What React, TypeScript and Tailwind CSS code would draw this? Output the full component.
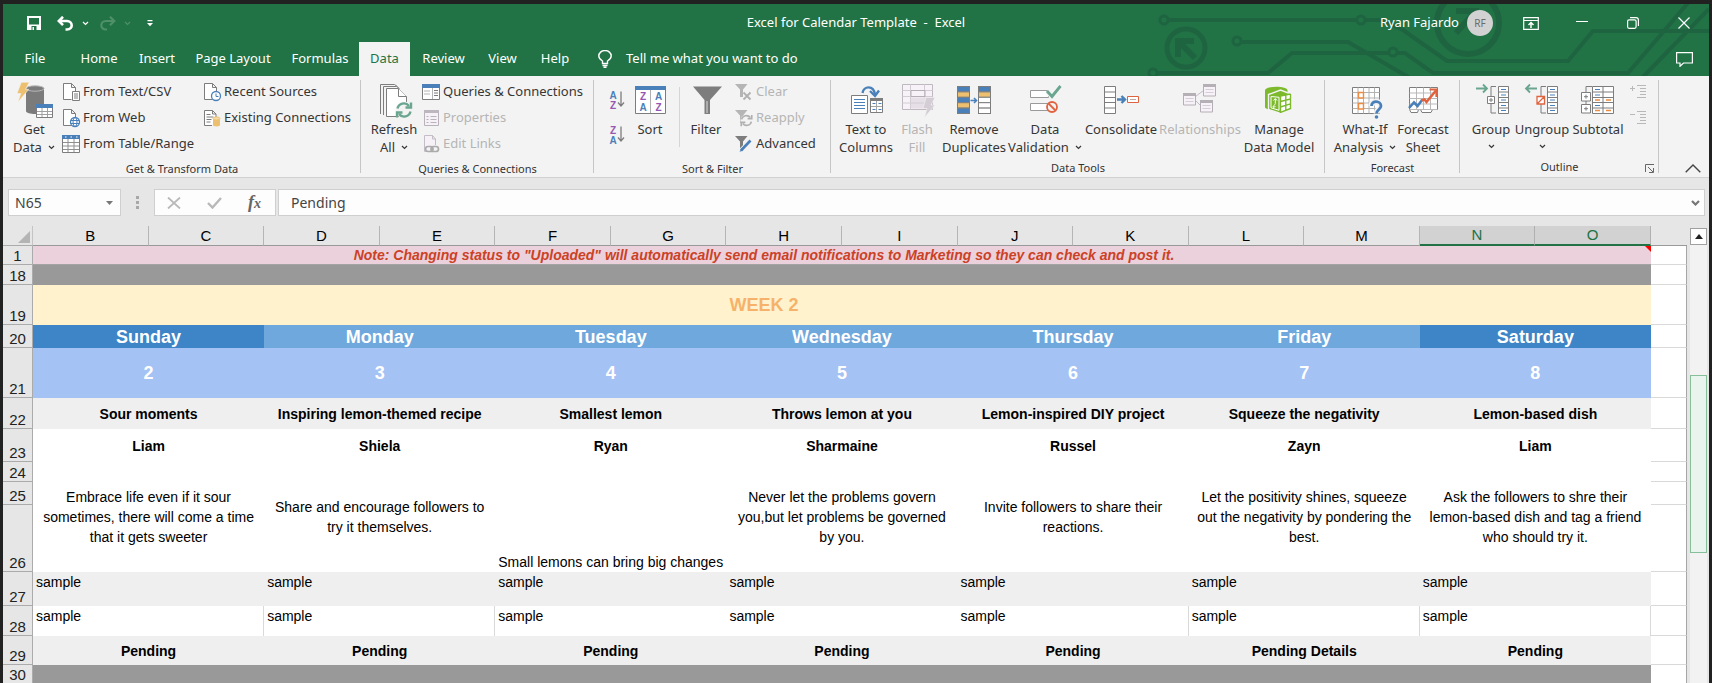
import React from 'react';
import clsx from 'clsx';

const BLUE = '#4a80ba';
const GRAY = '#7d7d7d';
const GREEN = '#6aa58f';
const RED = '#e0633f';
const GOLD = '#ecc06e';
const PURPLE = '#9558b2';

/* ---------- Small shared pieces ---------- */

function Chevron({ className }: { className?: string }) {
  return (
    <svg width="7" height="5" viewBox="0 0 7 5" className={className} fill="none" stroke="currentColor" strokeWidth="1.2">
      <path d="M1 1l2.5 2.5L6 1" />
    </svg>
  );
}

function LargeIcon({ children }: { children: React.ReactNode }) {
  return (
    <svg width="36" height="36" viewBox="0 0 36 36" fill="none" className="overflow-visible mb-0.5">
      {children}
    </svg>
  );
}

function SmallIcon({ children }: { children: React.ReactNode }) {
  return (
    <svg width="18" height="18" viewBox="0 0 18 18" fill="none" className="shrink-0 overflow-visible">
      {children}
    </svg>
  );
}

type LargeButtonProps = {
  icon: React.ReactNode;
  lines: string[];
  width: string;
  disabled?: boolean;
  arrow?: 'inline' | 'below';
};

function LargeButton({ icon, lines, width, disabled, arrow }: LargeButtonProps) {
  return (
    <button
      disabled={disabled}
      className={clsx('shrink-0 flex flex-col items-center pt-[3px] text-[13px] leading-[18px] whitespace-nowrap', width, disabled ? 'text-[#b5b5b5]' : 'text-[#363636]')}
    >
      <LargeIcon>{icon}</LargeIcon>
      {lines.map((line, i) => (
        <span key={line} className="flex items-center gap-1.5">
          {line}
          {arrow === 'inline' && i === lines.length - 1 && <Chevron />}
        </span>
      ))}
      {arrow === 'below' && <Chevron className="mt-1.5" />}
    </button>
  );
}

function SmallButton({ icon, label, disabled }: { icon: React.ReactNode; label: string; disabled?: boolean }) {
  return (
    <button
      disabled={disabled}
      className={clsx('h-[26px] flex items-center gap-[3px] text-[13px] whitespace-nowrap', disabled ? 'text-[#b5b5b5]' : 'text-[#363636]')}
    >
      <SmallIcon>{icon}</SmallIcon>
      {label}
    </button>
  );
}

function RibbonGroup({ label, width, children, launcher }: { label: string; width: string; children: React.ReactNode; launcher?: boolean }) {
  return (
    <section aria-label={label} className={clsx('relative shrink-0 flex flex-col pt-[3px]', width)}>
      <div className="h-[78px] flex">{children}</div>
      <div className="pt-0.5 text-center text-[11px] leading-[20px] text-[#333]">{label}</div>
      {launcher && (
        <button aria-label="Outline settings" className="absolute right-1 bottom-[3px]">
          <svg width="10" height="10" viewBox="0 0 10 10" fill="none" stroke="#666">
            <path d="M.5 8V.5H9M3 3l5 5M8.500 4v4.500H4" />
          </svg>
        </button>
      )}
      <span className="absolute right-0 top-1 bottom-1 w-px bg-[#c6c6c6]" />
    </section>
  );
}

/* ---------- Icons ---------- */

const pageOutline = (
  <path d="M9.500 16.500H1.500V.500h8l4 4V9M9.500.500v4h4" stroke={GRAY} fill="#fff" />
);

const textCsvIcon = (
  <>
    {pageOutline}
    <path d="M10.500 8.500h7v9h-7z" fill="#fff" stroke={GRAY} />
    <path d="M12 11h4M12 13h4M12 15h4" stroke={GRAY} />
  </>
);

const webIcon = (
  <>
    {pageOutline}
    <circle cx="13" cy="13" r="4.500" fill="#fff" stroke={BLUE} strokeWidth="1.300" />
    <ellipse cx="13" cy="13" rx="2" ry="4.500" stroke={BLUE} />
    <path d="M8.500 11.500h9M8.500 14.500h9" stroke={BLUE} />
  </>
);

const tableIcon = (
  <>
    <path d="M.5.500h17v17H.5z" fill="#fff" stroke={GRAY} />
    <path d="M0 0h18v4H0z" fill={BLUE} />
    <path d="M3 2h1.500M8.500 2H10M14 2h1.500" stroke="#fff" />
    <path d="M6 4v13M12 4v13M1 7.500h16M1 11h16M1 14.500h16" stroke="#909090" />
  </>
);

const recentIcon = (
  <>
    {pageOutline}
    <circle cx="13" cy="13" r="4.500" fill="#fff" stroke={BLUE} strokeWidth="1.300" />
    <path d="M13 10.500V13.500h2.500" stroke={BLUE} />
  </>
);

const existingIcon = (
  <>
    <path d="M9 16.500H1.500V1.500h8l3.500 3.500V8M9.500 1.500v3.500h3.500" stroke={GRAY} fill="#fff" />
    <path d="M3.500 5.500h4M3.500 8h7M3.500 10.500h5M3.500 13h4" stroke={GRAY} />
    <path d="M10 9.500h7v7q-3.500 2-7 0z" fill={GOLD} />
    <ellipse cx="13.500" cy="9.500" rx="3.500" ry="1.500" fill="#f7dca6" stroke={GOLD} />
  </>
);

const getDataIcon = (
  <>
    <path d="M10 7v22c0 4 18 4 18 0V7z" fill="#7b7b7b" />
    <ellipse cx="19" cy="6.500" rx="9" ry="2.700" fill="#7b7b7b" stroke="#b9b9b9" />
    <path d="M5.300 .3h8L9.500 7.300h3.300L1.800 20.300 4.800 11.500H1z" fill={GOLD} stroke="#f3f3f3" strokeWidth=".6" />
    <path d="M20.500 22.500h16v13h-16z" fill="#fff" stroke={GRAY} />
    <path d="M20 22h17v4H20z" fill={BLUE} />
    <path d="M26 26v9M31.500 26v9M21 29.500h15M21 32.500h15" stroke="#a0a0a0" />
  </>
);

const refreshArrows = (color: string, width: number) => (
  <g stroke={color} strokeWidth={width}>
    <path d="M-6.500 -1.500A6.500 6.500 0 0 1 5 -4" />
    <path d="M6.500 1.500A6.500 6.500 0 0 1 -5 4" />
    <path d="M7 -7.500V-2.500H1.500M-7 7.500V2.500H-1.500" />
  </g>
);

const refreshIcon = (
  <>
    <path d="M4.500 32V2.500h14l3 2" stroke={GRAY} />
    <path d="M7.500 33V4.500h13l3 2" stroke={GRAY} />
    <path d="M10.500 34.500V6.500h12l8 8v20z" fill="#fff" stroke={GRAY} />
    <path d="M22.500 6.500v8h8" fill="#fff" stroke={GRAY} />
    <circle cx="28" cy="28" r="8.500" fill="#f3f3f3" />
    <g transform="translate(28 28)">{refreshArrows(GREEN, 2.4)}</g>
  </>
);

const queriesIcon = (
  <>
    <path d="M.5 1.500h17v15H.5z" fill="#fff" stroke={GRAY} />
    <path d="M0 1h18v4H0z" fill={BLUE} />
    <path d="M10.500 5v11M2 8h6M2 11h6" stroke="#b5b5b5" />
    <path d="M12 7.500h4M12 10h4M12 12.500h4" stroke={GRAY} />
  </>
);

const propertiesIcon = (
  <>
    <path d="M2.500 1.500h14v15h-14z" fill="#f6f0f7" stroke="#b9b2ba" />
    <path d="M2 1h15v3H2z" fill="#bdb6be" />
    <path d="M4.500 7.500h2M4.500 10.500h2M4.500 13.500h2M8.500 7.500h6M8.500 10.500h6M8.500 13.500h6" stroke="#b9b2ba" />
  </>
);

const editLinksIcon = (
  <>
    <path d="M5 16.500H2.500V.500h8l3 3.500V10M10.500.500v3.500h3" stroke="#c4bcc6" fill="#f6f0f7" />
    <rect x="3.500" y="11.500" width="7.500" height="5" rx="2.500" stroke="#ababab" strokeWidth="1.700" />
    <rect x="9" y="11.500" width="7.500" height="5" rx="2.500" stroke="#ababab" strokeWidth="1.700" />
  </>
);

function SortLetters({ first, second }: { first: string; second: string }) {
  return (
    <svg width="17" height="18" viewBox="0 0 17 18" fill="none" className="overflow-visible font-['Liberation_Sans',sans-serif]">
      <g textAnchor="middle" fontSize="10" fontWeight="700">
        <text x="4" y="8" fill={first === 'A' ? BLUE : PURPLE}>{first}</text>
        <text x="4" y="17.500" fill={second === 'A' ? BLUE : PURPLE}>{second}</text>
      </g>
      <path d="M12 .5v14.500M9 11.500l3 3.500 3-3.500" stroke={GRAY} strokeWidth="1.300" />
    </svg>
  );
}

const sortIcon = (
  <>
    <path d="M3.500 4.500h30v27h-30z" fill="#fff" stroke={GRAY} />
    <path d="M3 4h31v4H3z" fill={BLUE} />
    <path d="M18.500 8v23" stroke="#b0b0b0" />
    <g fontSize="10" fontWeight="700" textAnchor="middle" className="font-['Liberation_Sans',sans-serif]">
      <text x="11" y="18" fill={PURPLE}>Z</text>
      <text x="11" y="28.500" fill={BLUE}>A</text>
      <text x="26.500" y="18" fill={BLUE}>A</text>
      <text x="26.500" y="28.500" fill={PURPLE}>Z</text>
    </g>
  </>
);

const filterIcon = (
  <>
    <path d="M5 4.500h29L22 18v14h-5.500V18z" fill={GRAY} />
    <path d="M19 19v12" stroke="#bdbdbd" strokeWidth="1.500" />
  </>
);

const smallFunnel = (color: string) => <path d="M0 1h12.500L8 6.500V14H5V6.500z" fill={color} />;

const clearIcon = (
  <>
    {smallFunnel('#b5b5b5')}
    <path d="M8.500 9.500l7 7M15.500 9.500l-7 7" stroke="#b0b0b0" strokeWidth="1.800" />
  </>
);

const reapplyIcon = (
  <>
    {smallFunnel('#b5b5b5')}
    <circle cx="11.500" cy="11.500" r="6" fill="#f3f3f3" />
    <g transform="translate(11.500 11.500) scale(.75)">{refreshArrows('#b0b0b0', 2.2)}</g>
  </>
);

const advancedIcon = (
  <>
    {smallFunnel(GRAY)}
    <path d="M15.500 5.500L6 15.500" stroke="#f3f3f3" strokeWidth="4.500" />
    <path d="M15.500 5.500L6 15.500" stroke={BLUE} strokeWidth="2.600" />
    <path d="M6.500 13L4.500 17l4-2z" fill={BLUE} />
  </>
);

const textToColumnsIcon = (
  <>
    <path d="M3.500 13.500h16v18h-16z" fill="#fff" stroke={GRAY} />
    <path d="M6 17.500h11M6 20.500h11M6 23.500h11M6 26.500h11" stroke={BLUE} />
    <path d="M22.500 16.500h12v14h-12z" fill="#fff" stroke={GRAY} />
    <path d="M22 16h13v3H22z" fill={GRAY} />
    <path d="M28.500 19v11M23 24.500h11" stroke="#a5a5a5" />
    <path d="M24.500 21.500h3M30.500 21.500h3M24.500 27.500h3M30.500 27.500h3" stroke={BLUE} />
    <path d="M14.500 11c1-7 11-8.500 12.500 1.500" stroke={BLUE} strokeWidth="2.400" />
    <path d="M22 9l5 5 4-5.500" stroke={BLUE} strokeWidth="2.400" />
  </>
);

const flashFillIcon = (
  <>
    <path d="M3.500 2.500h30v25h-30z" fill="#f7f1f8" stroke="#bfb8c0" />
    <path d="M12 15.500h20v11H12z" fill="#e6dfe7" />
    <path d="M3.500 8.500h30M3.500 14.500h30M3.500 21h30M11.500 2.500v25M25.500 2.500v13" stroke="#d3ccd4" />
    <path d="M12 8.500h14v6H12z" stroke="#b5aeb6" />
    <path d="M27 15.500h9l-4 7.500h4L25.500 35.500l2.500-9h-4z" fill="#d4cdd5" stroke="#f3f3f3" strokeWidth=".6" />
  </>
);

const duplicateRows = [BLUE, GOLD, BLUE, GOLD, BLUE];
const uniqueRows = [BLUE, GOLD, '#fff', '#fff', '#fff'];

const removeDuplicatesIcon = (
  <>
    {duplicateRows.map((fill, i) => (
      <rect key={i} x="1.500" y={4.5 + i * 5.4} width="12" height="5.400" fill={fill} stroke={GRAY} />
    ))}
    {uniqueRows.map((fill, i) => (
      <rect key={i} x="22.500" y={4.5 + i * 5.4} width="12" height="5.400" fill={fill} stroke={GRAY} />
    ))}
    <path d="M14.500 18.500h6M18 16l2.500 2.500L18 21" stroke={BLUE} strokeWidth="1.600" />
  </>
);

const validationIcon = (
  <>
    <path d="M3.500 8.500h18v7h-18zM3.500 21.500h18v7h-18z" fill="#fff" stroke="#9a9a9a" />
    <path d="M20 9l5 5.500L33.500 4" stroke="#f3f3f3" strokeWidth="5" />
    <path d="M20 9l5 5.500L33.500 4" stroke={GREEN} strokeWidth="2.800" />
    <circle cx="25" cy="25" r="5" fill="#f3f3f3" stroke={RED} strokeWidth="1.800" />
    <path d="M21.500 21.500l7 7" stroke={RED} strokeWidth="1.800" />
  </>
);

const consolidateIcon = (
  <>
    <path d="M1.500 4.500h11v27h-11zM1.500 10h11M1.500 15.500h11M1.500 20.500h11M1.500 26h11" fill="#fff" stroke={GRAY} />
    <path d="M14 17.500h8M18.500 14l3.500 3.500-3.500 3.500" stroke={BLUE} strokeWidth="2.400" />
    <path d="M24.500 14.500h11v6h-11z" fill="#fff" stroke={RED} />
    <path d="M27 17.500h6" stroke="#b9a9a5" />
  </>
);

const relationshipsIcon = (
  <>
    <path d="M13.500 14.500l8-6M13.500 18.500l5 5" stroke="#c4bcc6" />
    {[[1.5, 11.5], [21.5, 2.5], [18.5, 18.5]].map(([x, y]) => (
      <g key={x} transform={`translate(${x} ${y})`}>
        <path d="M0 0h12v11.500H0z" fill="#f7f1f8" stroke="#b5aeb6" />
        <path d="M-.5-.5h13v3h-13z" fill="#b5b0b6" />
        <path d="M2 5h8M2 8h8" stroke="#d6cdd8" />
      </g>
    ))}
  </>
);

const dataModelIcon = (
  <>
    <path d="M4 8.500c0-5 22.500-5 22.500 0v17c-4 4-19 4-22.500 0z" fill="#7cba2c" />
    <path d="M7.500 12.500L19.500 8l10.500 4v15l-10.500 4.500-12-4z" fill="#7cba2c" stroke="#f3f3f3" strokeWidth="1.400" />
    <path d="M19.500 14l10-2v14.500l-10 4z" fill="#fff" />
    <path d="M19.500 14v17M24.800 13v16M29.500 12v15M19.500 14l10-2M19.500 19.500l10-2.500M19.500 25l10-3.200M19.500 30.300l10-3.800" stroke="#7cba2c" strokeWidth="1.400" />
    <path d="M10 14.500l8 .8v13l-8-2.500z" stroke="#fff" />
    <path d="M12.500 18.500l1.800-2 1.700 2M14.300 17v4.500c0 2-2.300 1.500-2.300 3.500M14.500 24.500l-2.500 1" stroke="#fff" />
  </>
);

const whatIfIcon = (
  <>
    <path d="M5.500 5.500h27v26h-27z" fill="#fff" stroke={GRAY} />
    <path d="M11 5.500v26M16.500 5.500v26M22 5.500v26M27.500 5.500v26M5.500 10.500h27M5.500 16h27M5.500 21h27M5.500 26.500h27" stroke="#b3b3b3" />
    <path d="M11.500 10.500h5v5.500h-5zM11.500 21.500h5V27h-5z" fill="#fff" stroke="#ec8b42" strokeWidth="1.400" />
    <path d="M24.500 24c0-6 9.500-5.500 9.500 0 0 3.500-4.500 3.500-4.500 7.500" stroke="#f3f3f3" strokeWidth="6" />
    <path d="M24.500 24c0-6 9.500-5.500 9.500 0 0 3.500-4.500 3.500-4.500 7.500" stroke={BLUE} strokeWidth="2.800" />
    <circle cx="29.500" cy="35" r="1.800" fill={BLUE} />
  </>
);

const forecastIcon = (
  <>
    <path d="M4.500 5.500h28v22h-5l-1.500 3h-9l-1.500-3h-2l-1 3H6l-1.500-3z" fill="#fff" stroke={GRAY} />
    <path d="M11.500 5.500v22M18.500 5.500v22M25.500 5.500v22M4.500 11h28M4.500 16.500h28M4.500 22h28M4.500 27.500h28" stroke="#b9b9b9" />
    <path d="M4 26l5-5.500 3.500 3.500 5-6.500" stroke={BLUE} strokeWidth="2.600" />
    <path d="M16 18.500l3.500-1 2 2.500L31 8.500" stroke={RED} strokeWidth="2.600" />
    <path d="M24.500 7.500H31.500V15" stroke={RED} strokeWidth="2.200" />
  </>
);

function OutlineRows({ x }: { x: number }) {
  return (
    <g transform={`translate(${x} 0)`}>
      <path d="M0 4.500h10v27H0zM0 10h10M0 15.500h10M0 20.500h10M0 26h10" fill="#fff" stroke={GRAY} />
      <path d="M2.500 7.500h5M2.500 13h5M2.500 18h5M2.500 23.500h5M2.500 28.500h5" stroke={BLUE} />
    </g>
  );
}

const groupIcon = (
  <>
    <path d="M3 6.500h11M10 2.500l4 4-4 4" stroke={GREEN} strokeWidth="1.800" />
    <path d="M23 4.500h-5v10M18 21.500v9.500h5" stroke={GRAY} />
    <path d="M14.500 14.500h7v7h-7z" fill="#fff" stroke={GRAY} />
    <path d="M16 18h4M18 16v4" stroke={GRAY} />
    <OutlineRows x={25.5} />
  </>
);

const ungroupIcon = (
  <>
    <path d="M13 6.500H2M6 2.500l-4 4 4 4" stroke={GREEN} strokeWidth="1.800" />
    <path d="M22 4.500h-5v10M17 21.500v9.500h5" stroke={GRAY} />
    <path d="M13 14.500h7.500V22H13zM13.500 21.500l7-7" fill="#fff" stroke={RED} strokeWidth="1.300" />
    <OutlineRows x={23.5} />
  </>
);

const subtotalIcon = (
  <>
    <path d="M12 4.500H6V10M6 19v3" stroke={GRAY} />
    <path d="M1.500 10.500h9v8.500h-9zM1.500 22.500h9v8.500h-9z" fill="#fff" stroke={GRAY} />
    <path d="M4 14.700h4M6 12.700v4M4 26.700h4M6 24.700v4" stroke={GRAY} />
    <path d="M12.500 4.500h21v27h-21zM12.500 10h21M12.500 15.500h21M12.500 20.500h21M12.500 26h21M23 4.500v27" fill="#fff" stroke={GRAY} />
    <path d="M15 7.500h5M15 13h5M15 23.500h5" stroke={BLUE} />
    <path d="M15 18h5M26 18h5M15 28.500h5M26 28.500h5" stroke="#ec8b42" strokeWidth="1.300" />
  </>
);

/* ---------- Title bar ---------- */

function CircuitArt() {
  return (
    <svg width="562" height="72" viewBox="0 0 562 72" fill="none" stroke="#1f6440" strokeWidth="4" className="absolute right-0 top-0">
      <circle cx="17" cy="16" r="4" strokeWidth="3" />
      <path d="M21 16h189M218 16h17l21 10 44 31h121l25-30h116" />
      <circle cx="214" cy="16" r="4" strokeWidth="3" />
      <circle cx="90" cy="37" r="4" strokeWidth="3" />
      <path d="M94 38h107l62 36" />
      <circle cx="6" cy="69" r="4" strokeWidth="3" />
      <path d="M10 69h111l24-20h97M250 49h8l28 20h195L541-1M496 73l66-68" />
      <circle cx="246" cy="48" r="4" strokeWidth="3" />
      <circle cx="39" cy="44" r="19" strokeWidth="5" />
      <path d="M31 53V37h16M32 38l16 16" strokeWidth="6" />
      <circle cx="321" cy="19" r="31" strokeWidth="6" />
      <path d="M309 7h20v22M329 7l-20 22" strokeWidth="6" />
    </svg>
  );
}

function TitleBar() {
  return (
    <div className="relative h-[38px] grid grid-cols-[1fr_auto_1fr] items-center text-[13px] text-white">
      <div className="flex items-center pl-6 gap-4">
        <button aria-label="Save">
          <svg width="14" height="14" viewBox="0 0 14 14" fill="none">
            <path d="M1 1h12v12H1z" stroke="#fff" strokeWidth="2" />
            <path d="M1 8.500h12V14H1z" fill="#fff" />
            <path d="M4.500 10h5v4h-5z" fill="#217346" />
            <path d="M5.500 11h1.500v3H5.500z" fill="#fff" />
          </svg>
        </button>
        <button aria-label="Undo" className="flex items-center gap-2">
          <svg width="17" height="15" viewBox="0 0 17 15" fill="none" stroke="#fff" strokeWidth="2.600">
            <path d="M6 .8L1.800 5 6 9.200M2 5h8c6 0 6.500 8.500 0 8.500H8.500" />
          </svg>
          <Chevron />
        </button>
        <button aria-label="Redo" disabled className="flex items-center gap-2 -ml-1.5 text-[#4f9069]">
          <svg width="17" height="15" viewBox="0 0 17 15" fill="none" stroke="currentColor" strokeWidth="2.200">
            <path d="M11 .8L15.200 5 11 9.200M15 5H7C1 5 .5 13.500 7 13.500h1" />
          </svg>
          <Chevron />
        </button>
        <button aria-label="Customize Quick Access Toolbar">
          <svg width="6" height="7" viewBox="0 0 6 7" fill="#fff">
            <path d="M.5 0h5v1.200h-5zM0 3h6L3 6.200z" />
          </svg>
        </button>
      </div>
      <div className="whitespace-pre">Excel for Calendar Template  -  Excel</div>
      <div className="flex items-center justify-end pr-[19px]">
        <span>Ryan Fajardo</span>
        <button aria-label="Account" className="ml-2 w-[26px] h-[26px] rounded-full bg-[#d2d2d2] text-[10px] text-[#6b6b6b]">RF</button>
        <button aria-label="Ribbon Display Options" className="ml-[30px]">
          <svg width="16" height="13" viewBox="0 0 16 13" fill="none" stroke="#fff">
            <path d="M.7.700h14.600v11.600H.7zM.7 3.500h14.600" strokeWidth="1.200" />
            <path d="M8 11V5.500M5.500 8L8 5.500 10.500 8" strokeWidth="1.500" />
          </svg>
        </button>
        <button aria-label="Minimize" className="ml-[37px]">
          <svg width="12" height="12" viewBox="0 0 12 12" stroke="#fff"><path d="M0 4.500h12" /></svg>
        </button>
        <button aria-label="Restore" className="ml-[39px]">
          <svg width="12" height="12" viewBox="0 0 12 12" fill="none" stroke="#fff" strokeWidth="1.200">
            <rect x=".6" y="2.800" width="8.500" height="8.500" rx="1.500" />
            <path d="M3 .6h6c1.500 0 2.400.9 2.400 2.400v6" />
          </svg>
        </button>
        <button aria-label="Close" className="ml-[39px]">
          <svg width="12" height="12" viewBox="0 0 12 12" stroke="#fff" strokeWidth="1.200"><path d="M.5.500l11 11M11.500.500l-11 11" /></svg>
        </button>
      </div>
    </div>
  );
}

const tabs = [
  { label: 'Home', width: 'w-[60px]' },
  { label: 'Insert', width: 'w-[56px]' },
  { label: 'Page Layout', width: 'w-[96px]' },
  { label: 'Formulas', width: 'w-[78px]' },
  { label: 'Data', width: 'w-[51px]' },
  { label: 'Review', width: 'w-[67px]' },
  { label: 'View', width: 'w-[51px]' },
  { label: 'Help', width: 'w-[54px]' },
];

function TabBar() {
  return (
    <nav className="relative h-[34px] flex items-stretch text-[13px] text-white whitespace-nowrap">
      <button className="w-11 ml-2.5 mr-3">File</button>
      {tabs.map(({ label, width }) => (
        <button key={label} className={clsx(width, label === 'Data' && 'bg-[#f3f3f3] text-[#217346]')}>{label}</button>
      ))}
      <button className="flex items-center gap-3.5 ml-4">
        <svg width="14" height="18" viewBox="0 0 14 18" fill="none" stroke="#fff" strokeWidth="1.400">
          <path d="M4.500 13.500V11C2 9.500.8 8 .8 6a6.200 5.500 0 0 1 12.400 0c0 2-1.200 3.500-3.700 5v2.500zM4.500 15.500h5M5.500 17.300h3" />
        </svg>
        Tell me what you want to do
      </button>
      <button aria-label="Comments" className="ml-auto mr-4">
        <svg width="17" height="15" viewBox="0 0 17 15" fill="none" stroke="#fff" strokeWidth="1.200">
          <path d="M.6.600h15.800v10.400H7.500L4 14.300V11H.6z" />
        </svg>
      </button>
    </nav>
  );
}

/* ---------- Ribbon ---------- */

function Ribbon() {
  return (
    <div className="relative flex h-[102px] bg-[#f3f3f3] border-b border-[#d2d2d2] overflow-hidden">
      <RibbonGroup label="Get & Transform Data" width="w-[358px]">
        <LargeButton icon={getDataIcon} lines={['Get', 'Data']} width="w-[44px] ml-[9px]" arrow="inline" />
        <div className="ml-1.5 w-[141px] flex flex-col items-start">
          <SmallButton icon={textCsvIcon} label="From Text/CSV" />
          <SmallButton icon={webIcon} label="From Web" />
          <SmallButton icon={tableIcon} label="From Table/Range" />
        </div>
        <div className="flex flex-col items-start">
          <SmallButton icon={recentIcon} label="Recent Sources" />
          <SmallButton icon={existingIcon} label="Existing Connections" />
        </div>
      </RibbonGroup>

      <RibbonGroup label="Queries & Connections" width="w-[233px]">
        <LargeButton icon={refreshIcon} lines={['Refresh', 'All']} width="w-[48px] ml-[9px]" arrow="inline" />
        <div className="ml-1 flex flex-col items-start">
          <SmallButton icon={queriesIcon} label="Queries & Connections" />
          <SmallButton icon={propertiesIcon} label="Properties" disabled />
          <SmallButton icon={editLinksIcon} label="Edit Links" disabled />
        </div>
      </RibbonGroup>

      <RibbonGroup label="Sort & Filter" width="w-[237px]">
        <div className="ml-[15px] pt-3 flex flex-col gap-[17px]">
          <button aria-label="Sort A to Z" className="block"><SortLetters first="A" second="Z" /></button>
          <button aria-label="Sort Z to A" className="block"><SortLetters first="Z" second="A" /></button>
        </div>
        <LargeButton icon={sortIcon} lines={['Sort']} width="w-[36px] ml-[6px]" />
        <span className="w-px h-[60px] ml-[11px] mt-2 bg-[#d5d5d5]" />
        <LargeButton icon={filterIcon} lines={['Filter']} width="w-[36px] ml-2" />
        <div className="ml-[11px] flex flex-col items-start">
          <SmallButton icon={clearIcon} label="Clear" disabled />
          <SmallButton icon={reapplyIcon} label="Reapply" disabled />
          <SmallButton icon={advancedIcon} label="Advanced" />
        </div>
      </RibbonGroup>

      <RibbonGroup label="Data Tools" width="w-[494px]">
        <LargeButton icon={textToColumnsIcon} lines={['Text to', 'Columns']} width="w-[52px] ml-[9px]" />
        <LargeButton icon={flashFillIcon} lines={['Flash', 'Fill']} width="w-[50px]" disabled />
        <LargeButton icon={removeDuplicatesIcon} lines={['Remove', 'Duplicates']} width="w-[64px]" />
        <LargeButton icon={validationIcon} lines={['Data', 'Validation']} width="w-[78px]" arrow="inline" />
        <LargeButton icon={consolidateIcon} lines={['Consolidate']} width="w-[74px]" />
        <LargeButton icon={relationshipsIcon} lines={['Relationships']} width="w-[84px]" disabled />
        <LargeButton icon={dataModelIcon} lines={['Manage', 'Data Model']} width="w-[74px]" />
      </RibbonGroup>

      <RibbonGroup label="Forecast" width="w-[135px]">
        <LargeButton icon={whatIfIcon} lines={['What-If', 'Analysis']} width="w-[62px] ml-[9px]" arrow="inline" />
        <LargeButton icon={forecastIcon} lines={['Forecast', 'Sheet']} width="w-[54px]" />
      </RibbonGroup>

      <RibbonGroup label="Outline" width="w-[199px]" launcher>
        <LargeButton icon={groupIcon} lines={['Group']} width="w-[44px] ml-[9px]" arrow="below" />
        <LargeButton icon={ungroupIcon} lines={['Ungroup']} width="w-[58px]" arrow="below" />
        <LargeButton icon={subtotalIcon} lines={['Subtotal']} width="w-[54px]" />
        <div className="ml-[5px] pt-1.5 flex flex-col gap-3">
          <button aria-label="Show Detail" disabled className="block">
            <svg width="17" height="14" viewBox="0 0 17 14" fill="none" stroke="#b8b8b8">
              <path d="M0 3.500h5M2.500 1v5M7 .5h9M10 3.500h6M10 6.500h6M10 9.500h6M7 12.500h9" />
            </svg>
          </button>
          <button aria-label="Hide Detail" disabled className="block">
            <svg width="17" height="14" viewBox="0 0 17 14" fill="none" stroke="#b8b8b8">
              <path d="M0 3.500h5M7 .5h9M10 3.500h6M10 6.500h6M10 9.500h6M7 12.500h9" />
            </svg>
          </button>
        </div>
      </RibbonGroup>

      <button aria-label="Collapse the Ribbon" className="ml-auto mr-2 mb-1 self-end">
        <svg width="16" height="9" viewBox="0 0 16 9" fill="none" stroke="#444" strokeWidth="1.400">
          <path d="M.7 8.200L8 1l7.300 7.200" />
        </svg>
      </button>
    </div>
  );
}

/* ---------- Formula bar ---------- */

function FormulaBar() {
  return (
    <div className="flex items-stretch h-12 pt-[11px] pb-2.5 pl-[5px] pr-1 text-[14px] text-[#444]">
      <div className="w-[113px] flex items-center bg-[#fdfdfd] border border-[#cfcfcf]">
        <input aria-label="Name Box" defaultValue="N65" className="w-20 pl-1.5 outline-none" />
        <button aria-label="Named ranges" className="ml-auto mr-[7px]">
          <svg width="7" height="4" viewBox="0 0 7 4"><path d="M0 0h7L3.500 4z" fill="#777" /></svg>
        </button>
      </div>
      <div className="w-[33px] flex flex-col items-center justify-center gap-0.5">
        <i className="w-[3px] h-[3px] bg-[#a8a8a8]" />
        <i className="w-[3px] h-[3px] bg-[#a8a8a8]" />
        <i className="w-[3px] h-[3px] bg-[#a8a8a8]" />
      </div>
      <div className="w-[122px] flex items-center justify-between pl-3 pr-3.5 bg-[#fdfdfd] border border-[#cfcfcf]">
        <button aria-label="Cancel" disabled>
          <svg width="14" height="12" viewBox="0 0 14 12" stroke="#b9b9b9" strokeWidth="1.800"><path d="M1 .5l12 11M13 .5L1 11.500" /></svg>
        </button>
        <button aria-label="Enter" disabled>
          <svg width="15" height="12" viewBox="0 0 15 12" fill="none" stroke="#b9b9b9" strokeWidth="2.400"><path d="M1 6l4.500 4.500L14 1" /></svg>
        </button>
        <button aria-label="Insert Function" className="font-['Liberation_Serif',serif] italic font-bold text-[18px] leading-5 text-[#666]">
          f<span className="text-[14px]">x</span>
        </button>
      </div>
      <div className="flex-1 ml-0.5 flex items-center bg-[#fdfdfd] border border-[#cfcfcf]">
        <input aria-label="Formula Bar" defaultValue="Pending" className="flex-1 pl-3 outline-none" />
        <button aria-label="Expand Formula Bar" className="mr-1">
          <svg width="9" height="6" viewBox="0 0 9 6" fill="none" stroke="#777" strokeWidth="2.200"><path d="M1 1l3.500 3.500L8 1" /></svg>
        </button>
      </div>
    </div>
  );
}

/* ---------- Worksheet ---------- */

const columns = ['B', 'C', 'D', 'E', 'F', 'G', 'H', 'I', 'J', 'K', 'L', 'M', 'N', 'O'];

const days = [
  { day: 'Sunday', date: 2, title: 'Sour moments', owner: 'Liam', text: 'Embrace life even if it sour sometimes, there will come a time that it gets sweeter', status: 'Pending' },
  { day: 'Monday', date: 3, title: 'Inspiring lemon-themed recipe', owner: 'Shiela', text: 'Share and encourage followers to try it themselves.', status: 'Pending' },
  { day: 'Tuesday', date: 4, title: 'Smallest lemon', owner: 'Ryan', text: 'Small lemons can bring big changes', overflow: true, status: 'Pending' },
  { day: 'Wednesday', date: 5, title: 'Throws lemon at you', owner: 'Sharmaine', text: 'Never let the problems govern you,but let problems be governed by you.', status: 'Pending' },
  { day: 'Thursday', date: 6, title: 'Lemon-inspired DIY project', owner: 'Russel', text: 'Invite followers to share their reactions.', status: 'Pending' },
  { day: 'Friday', date: 7, title: 'Squeeze the negativity', owner: 'Zayn', text: 'Let the positivity shines, squeeze out the negativity by pondering the best.', status: 'Pending Details' },
  { day: 'Saturday', date: 8, title: 'Lemon-based dish', owner: 'Liam', text: 'Ask the followers to shre their lemon-based dish and tag a friend who should try it.', status: 'Pending' },
];

function Row({ n, height, children }: { n: number; height: string; children?: React.ReactNode }) {
  return (
    <tr className={height}>
      <th scope="row" className="p-0 align-bottom font-normal leading-4 text-[#222] border-b border-r border-[#ababab]">{n}</th>
      {children}
      <td className="p-0 bg-white border-b border-r border-b-[#d9d9d9] border-r-[#a6a6a6]" />
    </tr>
  );
}

function Sheet() {
  return (
    <table className="w-full table-fixed border-separate border-spacing-0 font-['Liberation_Sans',Arial,sans-serif] text-[15px] leading-5 text-black">
      <colgroup>
        <col className="w-[30px]" />
        {columns.map((c) => <col key={c} />)}
        <col className="w-9" />
      </colgroup>
      <thead>
        <tr className="h-5">
          <th className="p-0 border-b border-r border-b-[#ababab] border-r-[#c4c4c4]">
            <svg width="12" height="12" viewBox="0 0 12 12" className="ml-auto mr-0.5 mt-0.5"><path d="M12 0v12H0z" fill="#b4b4b4" /></svg>
          </th>
          {columns.map((c) => {
            const selected = c === 'N' || c === 'O';
            return (
              <th
                key={c}
                scope="col"
                className={clsx('p-0 h-5 font-normal leading-[18px] border-r', selected ? 'bg-[#d2d2d2] text-[#217346] border-b-2 border-b-[#217346] border-r-[#b0b0b0]' : 'border-b border-b-[#999] border-r-[#b5b5b5]')}
              >
                {c}
              </th>
            );
          })}
          <th className="p-0 border-b border-[#999]" />
        </tr>
      </thead>
      <tbody>
        <Row n={1} height="h-[19px]">
          <td colSpan={14} className="relative p-0 pr-39 bg-[#ead1dc] border-b border-[#a3a3a3] text-center text-[14px] leading-[18px] font-bold italic text-[#cc4125]">
            Note: Changing status to "Uploaded" will automatically send email notifications to Marketing so they can check and post it.
            <svg width="6" height="6" viewBox="0 0 6 6" className="absolute right-0 top-0"><path d="M0 0h6v6z" fill="#f00" /></svg>
          </td>
        </Row>
        <Row n={18} height="h-5">
          <td colSpan={14} className="p-0 bg-[#999]" />
        </Row>
        <Row n={19} height="h-10">
          <td colSpan={14} className="p-0 pr-39 bg-[#fff2cc] text-center text-[18px] font-bold text-[#f6b26b]">WEEK 2</td>
        </Row>
        <Row n={20} height="h-[23px]">
          {days.map(({ day }) => (
            <td key={day} colSpan={2} className={clsx('p-0 text-center text-[18px] font-bold text-white', day.startsWith('S') ? 'bg-[#3d85c6]' : 'bg-[#6fa8dc]')}>{day}</td>
          ))}
        </Row>
        <Row n={21} height="h-[50px]">
          {days.map(({ day, date }) => (
            <td key={day} colSpan={2} className="p-0 bg-[#a4c2f4] text-center text-[18px] font-bold text-white">{date}</td>
          ))}
        </Row>
        <Row n={22} height="h-[31px]">
          {days.map(({ day, title }) => (
            <td key={day} colSpan={2} className="p-0 bg-[#efefef] text-center text-[14px] font-bold">{title}</td>
          ))}
        </Row>
        <Row n={23} height="h-[33px]">
          {days.map(({ day, owner }) => (
            <td key={day} colSpan={2} className="p-0 bg-white text-center text-[14px] font-bold">{owner}</td>
          ))}
        </Row>
        <Row n={24} height="h-5">
          {days.map(({ day, text, overflow }) => (
            <td
              key={day}
              colSpan={2}
              rowSpan={3}
              className={clsx('py-0 bg-white text-[14px]', overflow ? 'px-[3px] align-bottom whitespace-nowrap overflow-hidden' : 'px-1 text-center align-middle')}
            >
              {text}
            </td>
          ))}
        </Row>
        <Row n={25} height="h-[23px]" />
        <Row n={26} height="h-[67px]" />
        <Row n={27} height="h-[34px]">
          {days.map(({ day }) => (
            <td key={day} colSpan={2} className="px-[3px] py-0 bg-[#efefef] align-top text-[14px]">sample</td>
          ))}
        </Row>
        <Row n={28} height="h-[30px]">
          {days.map(({ day }) => (
            <td
              key={day}
              colSpan={2}
              className={clsx('px-[3px] py-0 bg-white align-top text-[14px]', day !== 'Tuesday' && day !== 'Wednesday' && 'border-r border-[#d9d9d9]')}
            >
              sample
            </td>
          ))}
        </Row>
        <Row n={29} height="h-[29px]">
          {days.map(({ day, status }) => (
            <td key={day} colSpan={2} className="p-0 bg-[#efefef] text-center text-[14px] font-bold">{status}</td>
          ))}
        </Row>
        <Row n={30} height="h-[19px]">
          <td colSpan={14} className="p-0 bg-[#999]" />
        </Row>
      </tbody>
    </table>
  );
}

function VerticalScrollbar() {
  return (
    <div className="w-[22px] shrink-0 pl-[3px] pr-0.5 pt-0.5 flex flex-col">
      <button aria-label="Scroll up" className="h-[17px] flex items-center justify-center bg-white border border-[#a0a0a0]">
        <svg width="8" height="5" viewBox="0 0 8 5"><path d="M0 5h8L4 0z" fill="#222" /></svg>
      </button>
      <div className="flex-1 bg-[#f2f2f2] pt-[130px]">
        <div className="h-[178px] bg-[#eaf4ee] border border-[#86bf9a]" />
      </div>
    </div>
  );
}

export default function App() {
  return (
    <div className="min-h-screen bg-[#212121] pt-1 px-[3px] font-['Noto_Sans','Open_Sans',sans-serif]">
      <div className="bg-[#e6e6e6]">
        <header className="relative bg-[#217346] overflow-hidden">
          <CircuitArt />
          <TitleBar />
          <TabBar />
        </header>
        <Ribbon />
        <FormulaBar />
        <main className="flex">
          <div className="flex-1 min-w-0">
            <Sheet />
          </div>
          <VerticalScrollbar />
        </main>
      </div>
    </div>
  );
}
